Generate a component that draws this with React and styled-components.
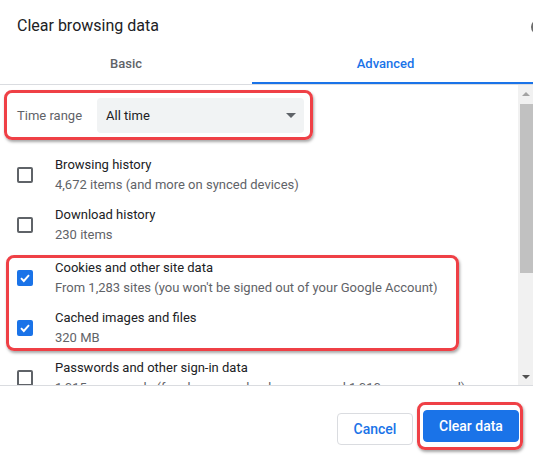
import React from "react";
import styled, { createGlobalStyle } from "styled-components";

const GlobalStyle = createGlobalStyle`
  html, body {
    margin: 0;
    padding: 0;
    background: #ffffff;
  }
  body {
    font-family: Roboto, "Liberation Sans", Arial, sans-serif;
    color: #202124;
  }
`;

const Dialog = styled.div`
  width: 533px;
  height: 458px;
  background: #ffffff;
  overflow: hidden;
  display: flex;
  flex-direction: column;
`;

const Header = styled.div`
  display: flex;
  justify-content: space-between;
  align-items: flex-start;
  padding: 14px 0 3px 17px;
  height: 24px;
`;

const Title = styled.h1`
  margin: 0;
  font-size: 16px;
  font-weight: 400;
  line-height: 24px;
  color: #202124;
`;

const CloseDot = styled.svg`
  flex: none;
  width: 16px;
  height: 16px;
  margin-top: 5px;
  margin-right: -14px;
`;

const TabBar = styled.div`
  display: flex;
  border-bottom: 1px solid #dadce0;
`;

const Tab = styled.div`
  width: ${(p) => (p.$grow ? "auto" : "252px")};
  flex: ${(p) => (p.$grow ? "1" : "none")};
  padding: 13px ${(p) => (p.$grow ? "14px" : "0")} 8px 0;
  text-align: center;
  font-size: 13px;
  font-weight: 500;
  line-height: 20px;
  color: ${(p) => (p.$active ? "#1a73e8" : "#5f6368")};
  border-bottom: 2px solid ${(p) => (p.$active ? "#1a73e8" : "transparent")};
`;

const Body = styled.div`
  display: flex;
  height: 300px;
  border-bottom: 1px solid #dadce0;
`;

const List = styled.div`
  flex: 1;
  overflow: hidden;
  padding-top: 5px;
`;

const Marked = styled.div`
  border: 3px solid #ef4046;
  border-radius: 8px;
  box-shadow: 1px 2px 3px rgba(0, 0, 0, 0.35);
`;

const RangeBox = styled(Marked)`
  display: inline-flex;
  align-items: center;
  gap: 15px;
  margin-left: 4px;
  padding: 5px 6px 4px 10px;
`;

const RangeLabel = styled.span`
  font-size: 13px;
  line-height: 20px;
  color: #5f6368;
`;

const Select = styled.div`
  width: 207px;
  height: 35px;
  box-sizing: border-box;
  display: flex;
  align-items: center;
  justify-content: space-between;
  padding: 0 8px 0 9px;
  background: #f1f3f4;
  border-radius: 4px;
  font-size: 13px;
  color: #202124;
`;

const Caret = styled.span`
  width: 0;
  height: 0;
  border-left: 5px solid transparent;
  border-right: 5px solid transparent;
  border-top: 5px solid #5f6368;
`;

const Items = styled.div`
  margin-top: 10px;
`;

const Row = styled.div`
  display: flex;
  align-items: center;
  gap: 22px;
  padding: 5px 0 5px 17px;
`;

const ItemGroup = styled(Marked)`
  width: 447px;
  margin: 5px 0 2px 6px;

  & > ${Row} {
    padding-left: 8px;
  }
  & > ${Row}:first-child {
    padding-top: 0;
  }
  & > ${Row}:last-child {
    padding-bottom: 0;
  }
`;

const Box = styled.span`
  flex: none;
  width: 16px;
  height: 16px;
  box-sizing: border-box;
  border-radius: 2px;
  border: 2px solid ${(p) => (p.$checked ? "#1a73e8" : "#5f6368")};
  background: ${(p) => (p.$checked ? "#1a73e8" : "transparent")};
  display: flex;
  align-items: center;
  justify-content: center;
`;

const Texts = styled.div`
  display: flex;
  flex-direction: column;
  font-size: 13px;
  line-height: 20px;
  white-space: nowrap;
`;

const ItemTitle = styled.span`
  color: #202124;
`;

const ItemSub = styled.span`
  color: #5f6368;
`;

const Scrollbar = styled.div`
  width: 15px;
  flex: none;
  background: #f1f1f1;
  display: flex;
  flex-direction: column;
`;

const ArrowBtn = styled.div`
  height: 17px;
  display: flex;
  align-items: center;
  justify-content: center;
  &::after {
    content: "";
    width: 0;
    height: 0;
    border-left: 4px solid transparent;
    border-right: 4px solid transparent;
    ${(p) =>
      p.$down
        ? "border-top: 4px solid #505050;"
        : "border-bottom: 4px solid #a3a3a3;"}
  }
`;

const Thumb = styled.div`
  height: 169px;
  margin: 2px 0 0 2px;
  background: #c1c1c1;
`;

const Spacer = styled.div`
  flex: 1;
`;

const Footer = styled.div`
  flex: 1;
  display: flex;
  justify-content: flex-end;
  align-items: flex-start;
  gap: 4px;
  padding: 16px 10px 0 0;
`;

const Button = styled.button`
  height: 32px;
  margin-top: 11px;
  padding: 0;
  border-radius: 4px;
  font-family: Roboto, "Liberation Sans", Arial, sans-serif;
  font-size: 14px;
  font-weight: 500;
  white-space: nowrap;
  cursor: pointer;
  border: 1px solid ${(p) => (p.$primary ? "#1a73e8" : "#dadce0")};
  background: ${(p) => (p.$primary ? "#1a73e8" : "#ffffff")};
  color: ${(p) => (p.$primary ? "#ffffff" : "#1a73e8")};
  width: ${(p) => (p.$primary ? "96px" : "76px")};
`;

const ButtonMark = styled(Marked)`
  padding: 5px 1px 5px 3px;
  & > ${Button} {
    margin-top: 0;
  }
`;

const Check = () => (
  <svg width="12" height="12" viewBox="0 0 12 12">
    <path
      d="M2 6.2 L4.8 9 L10 3.2"
      fill="none"
      stroke="#ffffff"
      strokeWidth="1.9"
    />
  </svg>
);

const Item = ({ checked, title, sub }) => (
  <Row>
    <Box $checked={checked}>{checked && <Check />}</Box>
    <Texts>
      <ItemTitle>{title}</ItemTitle>
      <ItemSub>{sub}</ItemSub>
    </Texts>
  </Row>
);

const App = () => {
  return (
    <>
      <GlobalStyle />
      <Dialog>
        <Header>
          <Title>Clear browsing data</Title>
          <CloseDot viewBox="0 0 16 16">
            <circle cx="8" cy="8" r="8" fill="#6b6b6b" />
          </CloseDot>
        </Header>
        <TabBar>
          <Tab>Basic</Tab>
          <Tab $grow $active>
            Advanced
          </Tab>
        </TabBar>
        <Body>
          <List>
            <RangeBox>
              <RangeLabel>Time range</RangeLabel>
              <Select>
                All time
                <Caret />
              </Select>
            </RangeBox>
            <Items>
              <Item
                title="Browsing history"
                sub="4,672 items (and more on synced devices)"
              />
              <Item title="Download history" sub="230 items" />
              <ItemGroup>
                <Item
                  checked
                  title="Cookies and other site data"
                  sub="From 1,283 sites (you won't be signed out of your Google Account)"
                />
                <Item checked title="Cached images and files" sub="320 MB" />
              </ItemGroup>
              <Item
                title="Passwords and other sign-in data"
                sub="1,015 passwords (for ebay.com, dropbox.com, and 1,010 more, synced)"
              />
            </Items>
          </List>
          <Scrollbar>
            <ArrowBtn />
            <Thumb />
            <Spacer />
            <ArrowBtn $down />
          </Scrollbar>
        </Body>
        <Footer>
          <Button>Cancel</Button>
          <ButtonMark>
            <Button $primary>Clear data</Button>
          </ButtonMark>
        </Footer>
      </Dialog>
    </>
  );
};

export default App;
